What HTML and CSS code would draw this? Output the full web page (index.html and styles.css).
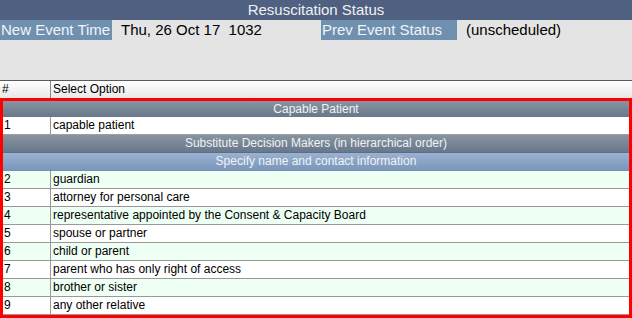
FILE: index.html
```html
<html lang="en">
<head>
    <meta charset="UTF-8">
    <title>Resuscitation Status</title>
    <link rel="stylesheet" href="styles.css">
</head>
<body>
    <div class="title-bar">Resuscitation Status</div>
    <div class="event-panel">
        <div class="event-row">
            <span class="event-label">New Event Time</span>
            <span class="event-value time">Thu, 26 Oct 17&nbsp; 1032</span>
            <span class="event-label prev">Prev Event Status</span>
            <span class="event-value">(unscheduled)</span>
        </div>
    </div>
    <div class="list-head">
        <div class="num">#</div>
        <div class="opt">Select Option</div>
    </div>
    <div class="options">
        <div class="group first">Capable Patient</div>
        <div class="row plain"><div class="num">1</div><div class="opt">capable patient</div></div>
        <div class="group">Substitute Decision Makers (in hierarchical order)</div>
        <div class="group blue">Specify name and contact information</div>
        <div class="row"><div class="num">2</div><div class="opt">guardian</div></div>
        <div class="row"><div class="num">3</div><div class="opt">attorney for personal care</div></div>
        <div class="row"><div class="num">4</div><div class="opt">representative appointed by the Consent &amp; Capacity Board</div></div>
        <div class="row"><div class="num">5</div><div class="opt">spouse or partner</div></div>
        <div class="row"><div class="num">6</div><div class="opt">child or parent</div></div>
        <div class="row"><div class="num">7</div><div class="opt">parent who has only right of access</div></div>
        <div class="row"><div class="num">8</div><div class="opt">brother or sister</div></div>
        <div class="row"><div class="num">9</div><div class="opt">any other relative</div></div>
    </div>
</body>
</html>
```
FILE: styles.css
```css
body {
    margin: 0;
    font-family: "Liberation Sans", Arial, sans-serif;
    background-color: #e4e4e4;
    color: #000;
}
.title-bar {
    height: 20px;
    line-height: 20px;
    background-color: #4f6080;
    color: #eef0f4;
    text-align: center;
    font-size: 15px;
}
.event-panel {
    height: 60px;
}
.event-row {
    display: flex;
    height: 20px;
    line-height: 20px;
    font-size: 15px;
}
.event-label {
    background-color: #7090b0;
    color: #f2f4f8;
    padding-left: 1px;
}
.event-label:first-child {
    width: 111px;
}
.event-label.prev {
    width: 135px;
}
.event-value {
    padding-left: 9px;
}
.event-value.time {
    width: 200px;
}
.list-head {
    display: flex;
    height: 17px;
    line-height: 17px;
    border-top: 1px solid #5a5a5a;
    background: linear-gradient(#ffffff, #e8e8e8);
    font-size: 12px;
}
.list-head .num {
    width: 48px;
    padding-left: 2px;
    border-right: 1px solid #8a8a8a;
}
.list-head .opt {
    padding-left: 2px;
}
.options {
    border: 3px solid #ff0000;
    background-color: #fff;
    font-size: 12px;
}
.group {
    height: 17px;
    line-height: 17px;
    text-align: center;
    color: #f0f2f4;
    background: linear-gradient(#8794a2, #68788a);
    border-bottom: 1px solid #5f6e7e;
}
.group.first {
    height: 16px;
    line-height: 16px;
    border-bottom: none;
}
.group.blue {
    background: linear-gradient(#9ab2d2, #7a96ba);
    border-bottom-color: #7490b4;
}
.row {
    display: flex;
    height: 17px;
    line-height: 17px;
    border-bottom: 1px solid #999;
}
.row:nth-child(odd) {
    background-color: #eefff4;
}
.row.plain {
    background-color: #fff;
    border-bottom-color: #a0a0a0;
}
.row .num {
    width: 46px;
    padding-left: 1px;
    border-right: 1px solid #999;
}
.row .opt {
    padding-left: 2px;
}
```
